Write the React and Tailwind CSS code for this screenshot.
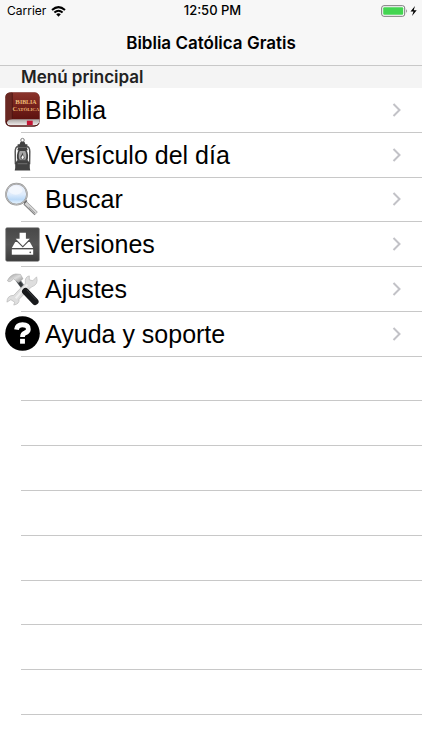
import React from "react";

function BookIcon() {
  return (
    <svg viewBox="0 0 36 36" className="size-[35px]" aria-hidden="true">
      <defs>
        <linearGradient id="cover" x1="0" y1="0" x2="0" y2="1">
          <stop offset="0" stopColor="#8b342c" />
          <stop offset="0.5" stopColor="#75211b" />
          <stop offset="1" stopColor="#5c120f" />
        </linearGradient>
        <linearGradient id="pages" x1="0" y1="0" x2="0" y2="1">
          <stop offset="0" stopColor="#a9a4a2" />
          <stop offset="1" stopColor="#f4f1f0" />
        </linearGradient>
      </defs>
      <rect x="0.5" y="0.5" width="35" height="35" rx="5" fill="#571512" />
      <path d="M6.5 0.5H30.5A5 5 0 0 1 35.5 5.5V28H7.5Z" fill="url(#cover)" />
      <path d="M6.5 0.5H5A4.5 4.5 0 0 0 0.5 6V30L7.5 28V0.5Z" fill="#6a2822" />
      <path d="M7.5 1V28" stroke="#4a1512" strokeWidth="0.8" />
      <path d="M2 31Q3 28 8 28H35V33Q33 34.5 30 34.5H5Q2 34 2 31Z" fill="url(#pages)" />
      <path d="M1 30Q1 35 6 35H30Q34 35 35 32" fill="none" stroke="#4d1311" strokeWidth="1" />
      <rect x="22.5" y="29.5" width="6" height="4.5" fill="#c31535" />
      <g fill="#efbb76" fontFamily="Liberation Serif, serif" fontWeight="700" textAnchor="middle">
        <text x="21.5" y="12.5" fontSize="7">B<tspan fontSize="6">IBLIA</tspan></text>
        <text x="21.5" y="19.5" fontSize="6.5">C<tspan fontSize="5">ATÓLICA</tspan></text>
      </g>
    </svg>
  );
}

function LanternIcon() {
  return (
    <svg viewBox="0 0 36 36" className="size-[35px]" fill="#414141" aria-hidden="true">
      <circle cx="18" cy="3.2" r="1.8" fill="none" stroke="#777" strokeWidth="1" />
      <path d="M16 5H20L21 7.5H23V11H13V7.5H15Z" />
      <path d="M13.5 11H22.5L23.5 13.5H12.5Z" />
      <path d="M14 9.5Q10.5 10 10.5 15L10.7 28M22 9.5Q25.5 10 25.5 15L25.3 28" fill="none" stroke="#555" strokeWidth="1.5" />
      <path d="M14 13H22Q25 18.5 23 24.5H13Q11 18.5 14 13Z" />
      <path d="M15.2 14.5H20.8Q23 19 21 23.5H15Q13 19 15.2 14.5Z" fill="#a5a5a5" />
      <path d="M18.5 16Q18 18 20 20.5Q20.5 23 18 23Q15.5 23 16 20Q17 18.5 18.5 16Z" />
      <path d="M18.4 18.5Q15.5 22 18 22.7Q20.5 22 18.4 18.5Z" fill="#fff" />
      <path d="M12.5 24H23.5L25.5 27V32L26 34.5H10L10.5 32V27Z" />
      <path d="M13 27.5H23" stroke="#888" strokeWidth="0.7" />
    </svg>
  );
}

function MagnifierIcon() {
  return (
    <svg viewBox="0 0 36 36" className="size-[35px]" aria-hidden="true">
      <defs>
        <linearGradient id="lens" x1="0" y1="0" x2="0" y2="1">
          <stop offset="0" stopColor="#eef1fb" />
          <stop offset="0.5" stopColor="#e0edfc" />
          <stop offset="0.75" stopColor="#bcdaf8" />
          <stop offset="1" stopColor="#f2faff" />
        </linearGradient>
      </defs>
      <path d="M20.5 21.5L32 32.5" stroke="#828282" strokeWidth="4.6" />
      <path d="M21 21.5L32 32" stroke="#d5d5d5" strokeWidth="3" />
      <path d="M24.5 26L31 32" stroke="#929292" strokeWidth="0.9" />
      <path d="M19.5 22L22.5 19" stroke="#666" strokeWidth="1.5" />
      <circle cx="11.8" cy="12.5" r="10.8" fill="url(#lens)" stroke="#909090" strokeWidth="1.7" />
      <circle cx="11.8" cy="12.5" r="10.8" fill="none" stroke="#d0d0d0" strokeWidth="0.7" />
      <ellipse cx="11" cy="8.5" rx="7" ry="4.5" fill="#fff" opacity="0.5" />
    </svg>
  );
}

function DownloadIcon() {
  return (
    <svg viewBox="0 0 36 36" className="size-[35px]" aria-hidden="true">
      <defs>
        <linearGradient id="tile" x1="0" y1="0" x2="0" y2="1">
          <stop offset="0" stopColor="#484848" />
          <stop offset="0.5" stopColor="#565656" />
          <stop offset="1" stopColor="#3b3b3b" />
        </linearGradient>
      </defs>
      <rect x="0.7" y="0.7" width="34.6" height="34.6" rx="1.5" fill="url(#tile)" stroke="#777" strokeWidth="0.6" />
      <path d="M10.5 15.5H25.5L29 21.5H7Z" fill="#fff" />
      <path d="M11 14H25.500L18.300 21Z" fill="#505050" />
      <path d="M15 6H21.5V12H25.5L18.3 19.5L11 12H15Z" fill="#fff" />
      <path d="M7 23H29V28.5H7Z" fill="#fff" />
      <circle cx="26" cy="26" r="0.9" fill="#555" />
    </svg>
  );
}

function ToolsIcon() {
  return (
    <svg viewBox="0 0 36 36" className="size-[35px]" aria-hidden="true">
      <defs>
        <linearGradient id="steel" x1="0" y1="0" x2="1" y2="1">
          <stop offset="0" stopColor="#999" />
          <stop offset="0.5" stopColor="#ddd" />
          <stop offset="1" stopColor="#888" />
        </linearGradient>
      </defs>
      <path d="M13 8L21 19" stroke="#60666b" strokeWidth="4.6" />
      <path d="M14 10L20 18" stroke="#33373a" strokeWidth="3" />
      <path d="M2.5 9Q5 3 11 2L16 2.5L18.5 7L14 11L11 9L9 7L6 9.5L4 10Z" fill="url(#steel)" stroke="#999" strokeWidth="0.5" />
      <path d="M32.500 5L28.500 9L25 8L25 4Q20 5 21 11.500L9 24Q2 24 2 31L6 28.500L10 31L9 34Q15 33 14.500 28L27 15.500Q35 13 32.500 5Z" fill="#dedede" stroke="#b8b8b8" strokeWidth="0.7" />
      <path d="M23 13L11 27" stroke="#f0f0f0" strokeWidth="2" />
      <path d="M21 20L31 30.500" stroke="#17191b" strokeWidth="7" strokeLinecap="round" />
      <path d="M22.5 18.500L32 28.500" stroke="#484b4e" strokeWidth="0.8" />
    </svg>
  );
}

function HelpIcon() {
  return (
    <svg viewBox="0 0 36 36" className="size-[35px]" aria-hidden="true">
      <circle cx="18" cy="18" r="17.8" fill="#000" />
      <path d="M11.8 14Q12.5 9 18 9Q24 9 24 13.5Q24 16 20.5 17.5Q18 18.5 18 21.5" fill="none" stroke="#fff" strokeWidth="4.9" />
      <rect x="15.5" y="23.5" width="5" height="5" fill="#fff" />
    </svg>
  );
}

const items = [
  { label: "Biblia", Icon: BookIcon },
  { label: "Versículo del día", Icon: LanternIcon },
  { label: "Buscar", Icon: MagnifierIcon },
  { label: "Versiones", Icon: DownloadIcon },
  { label: "Ajustes", Icon: ToolsIcon },
  { label: "Ayuda y soporte", Icon: HelpIcon },
];

const emptyRows = [1, 2, 3, 4, 5, 6, 7, 8];

function Chevron() {
  return (
    <svg viewBox="0 0 10 16" className="h-4 w-[10px]" fill="none" stroke="#c2c2c7" strokeWidth="2" aria-hidden="true">
      <path d="M1.5 2L7.5 8L1.5 14" />
    </svg>
  );
}

function StatusBar() {
  return (
    <div className="grid h-[22px] grid-cols-3 items-center pr-1 pl-[7px] text-[12px]">
      <div className="flex items-center gap-[5px]">
        <span>Carrier</span>
        <svg viewBox="0 0 15 11" className="h-[11px] w-[15px]" aria-label="Wi-Fi">
          <path d="M1 4Q7.5 -1.8 14 4M3.4 6.6Q7.5 3 11.6 6.6" fill="none" stroke="#000" strokeWidth="2" />
          <path d="M5.2 8.3Q7.5 6.3 9.8 8.3L7.5 10.7Z" />
        </svg>
      </div>
      <time className="text-center text-[13px] font-medium whitespace-nowrap">12:50 PM</time>
      <svg viewBox="0 0 37 12" className="h-3 w-[37px] justify-self-end" aria-label="Batería cargando">
        <rect x="0.7" y="0.7" width="23" height="10.6" rx="2.2" fill="#fff" stroke="#777" strokeWidth="1" />
        <rect x="2.2" y="2.2" width="20" height="7.6" rx="1" fill="#43d551" />
        <path d="M25.2 4Q27 6 25.2 8Z" fill="#777" />
        <path d="M34 1L29.5 6.5H32.5L31 11L35.7 5.2H32.7Z" />
      </svg>
    </div>
  );
}

export default function App() {
  return (
    <div className="flex min-h-screen flex-col bg-white font-['Inter',sans-serif] text-black">
      <header className="border-b border-[#c8c8c8] bg-[#f7f7f7]">
        <StatusBar />
        <h1 className="flex h-[43px] items-center justify-center text-[17px] font-semibold">Biblia Católica Gratis</h1>
      </header>
      <main className="flex flex-1 flex-col">
        <h2 className="h-[22px] bg-[#f4f4f4] pl-[21px] text-[17px] leading-[22px] font-semibold text-[#222]">Menú principal</h2>
        <ul className="grid flex-1 auto-rows-fr pb-[35px]">
          {items.map(({ label, Icon }) => (
            <li key={label} className="flex flex-col">
              <button type="button" className="flex w-full flex-1 items-center gap-[5px] pr-5 pl-[5px] text-left font-['Liberation_Sans',sans-serif] text-[25px] leading-8">
                <Icon />
                <span className="flex-1">{label}</span>
                <Chevron />
              </button>
              <div className="ml-[21px] border-b border-[#c8c8c8]" />
            </li>
          ))}
          {emptyRows.map((row) => (
            <li key={row} aria-hidden="true" className="ml-[21px] border-b border-[#c8c8c8]" />
          ))}
        </ul>
      </main>
    </div>
  );
}
